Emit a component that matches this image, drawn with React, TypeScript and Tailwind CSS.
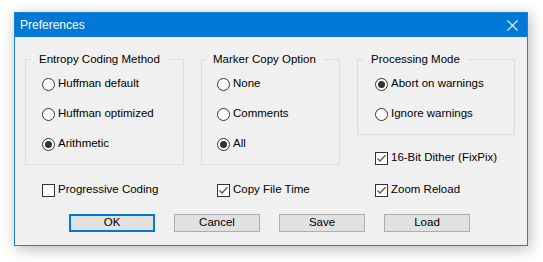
import React from 'react';

function Radio({ label, checked }: { label: string; checked?: boolean }) {
    return (
        <div className="flex h-[30px] items-center gap-[3px]">
            <span className="flex h-[13px] w-[13px] items-center justify-center rounded-full border border-[#333333] bg-white">
                {checked && <span className="h-[7px] w-[7px] rounded-full bg-[#333333]" />}
            </span>
            <span>{label}</span>
        </div>
    );
}

function Check({ label, checked }: { label: string; checked?: boolean }) {
    return (
        <div className="flex h-[16px] items-center gap-[3px]">
            <span className="flex h-[13px] w-[13px] items-center justify-center border border-[#333333] bg-white">
                {checked && (
                    <svg width="11" height="11" viewBox="0 0 11 11">
                        <path d="M1.5 5.5 L4 8 L9.5 2.2" fill="none" stroke="#555555" strokeWidth="1.3" />
                    </svg>
                )}
            </span>
            <span>{label}</span>
        </div>
    );
}

// group box: the caption sits over the top border line
function Group({ title, className, titleClass, children }: { title: string; className: string; titleClass: string; children: React.ReactNode }) {
    return (
        <div className={`relative border border-[#dcdcdc] pt-[9px] ${className}`}>
            <span className={`absolute top-[-8px] bg-[#f0f0f0] leading-[14px] ${titleClass}`}>{title}</span>
            {children}
        </div>
    );
}

function Button({ label, focused }: { label: string; focused?: boolean }) {
    return (
        <button
            className={
                focused
                    ? 'flex h-[18px] w-[86px] items-center justify-center border-2 border-[#0078d7] bg-[#e1e1e1]'
                    : 'flex h-[18px] w-[86px] items-center justify-center border border-[#adadad] bg-[#e1e1e1]'
            }
        >
            {label}
        </button>
    );
}

export default function App() {
    return (
        <div className="min-h-[262px] bg-white pl-[14px] pt-[12px] font-['Liberation_Sans',Arial,sans-serif] text-[11.5px] text-black">
            <div className="w-[514px] border border-[#1883d7] bg-[#f0f0f0] shadow-[2px_3px_14px_rgba(0,0,0,0.28)]">
                {/* Title bar */}
                <div className="flex h-[24px] items-center justify-between bg-[#0078d7] pl-[5px] pr-[9px] text-[12px] text-white">
                    <span>Preferences</span>
                    <svg width="11" height="11" viewBox="0 0 11 11">
                        <path d="M0.5 0.5 L10.5 10.5 M10.5 0.5 L0.5 10.5" stroke="white" strokeWidth="1.1" />
                    </svg>
                </div>

                {/* Body */}
                <div className="pl-[10px] pt-[22px] pb-[13px]">
                    <div className="flex items-start gap-[17px]">
                        <Group title="Entropy Coding Method" className="h-[106px] w-[159px] pl-[16px]" titleClass="left-[5px] pl-[8px] pr-[7px]">
                            <Radio label="Huffman default" />
                            <Radio label="Huffman optimized" />
                            <Radio label="Arithmetic" checked />
                        </Group>

                        <Group title="Marker Copy Option" className="h-[106px] w-[139px] pl-[15px]" titleClass="left-[4px] pl-[7px] pr-[7px]">
                            <Radio label="None" />
                            <Radio label="Comments" />
                            <Radio label="All" checked />
                        </Group>

                        <div className="w-[158px]">
                            <Group title="Processing Mode" className="h-[76px] w-[158px] pl-[17px]" titleClass="left-[5px] pl-[8px] pr-[7px]">
                                <Radio label="Abort on warnings" checked />
                                <Radio label="Ignore warnings" />
                            </Group>
                            <div className="mt-[15px] pl-[18px]">
                                <Check label="16-Bit Dither (FixPix)" checked />
                            </div>
                        </div>
                    </div>

                    <div className="mt-[16px] flex gap-[17px]">
                        <div className="w-[159px] pl-[17px]">
                            <Check label="Progressive Coding" />
                        </div>
                        <div className="w-[139px] pl-[16px]">
                            <Check label="Copy File Time" checked />
                        </div>
                        <div className="w-[158px] pl-[18px]">
                            <Check label="Zoom Reload" checked />
                        </div>
                    </div>

                    <div className="mt-[16px] flex justify-center gap-[19px] pr-[13px]">
                        <Button label="OK" focused />
                        <Button label="Cancel" />
                        <Button label="Save" />
                        <Button label="Load" />
                    </div>
                </div>
            </div>
        </div>
    );
}
